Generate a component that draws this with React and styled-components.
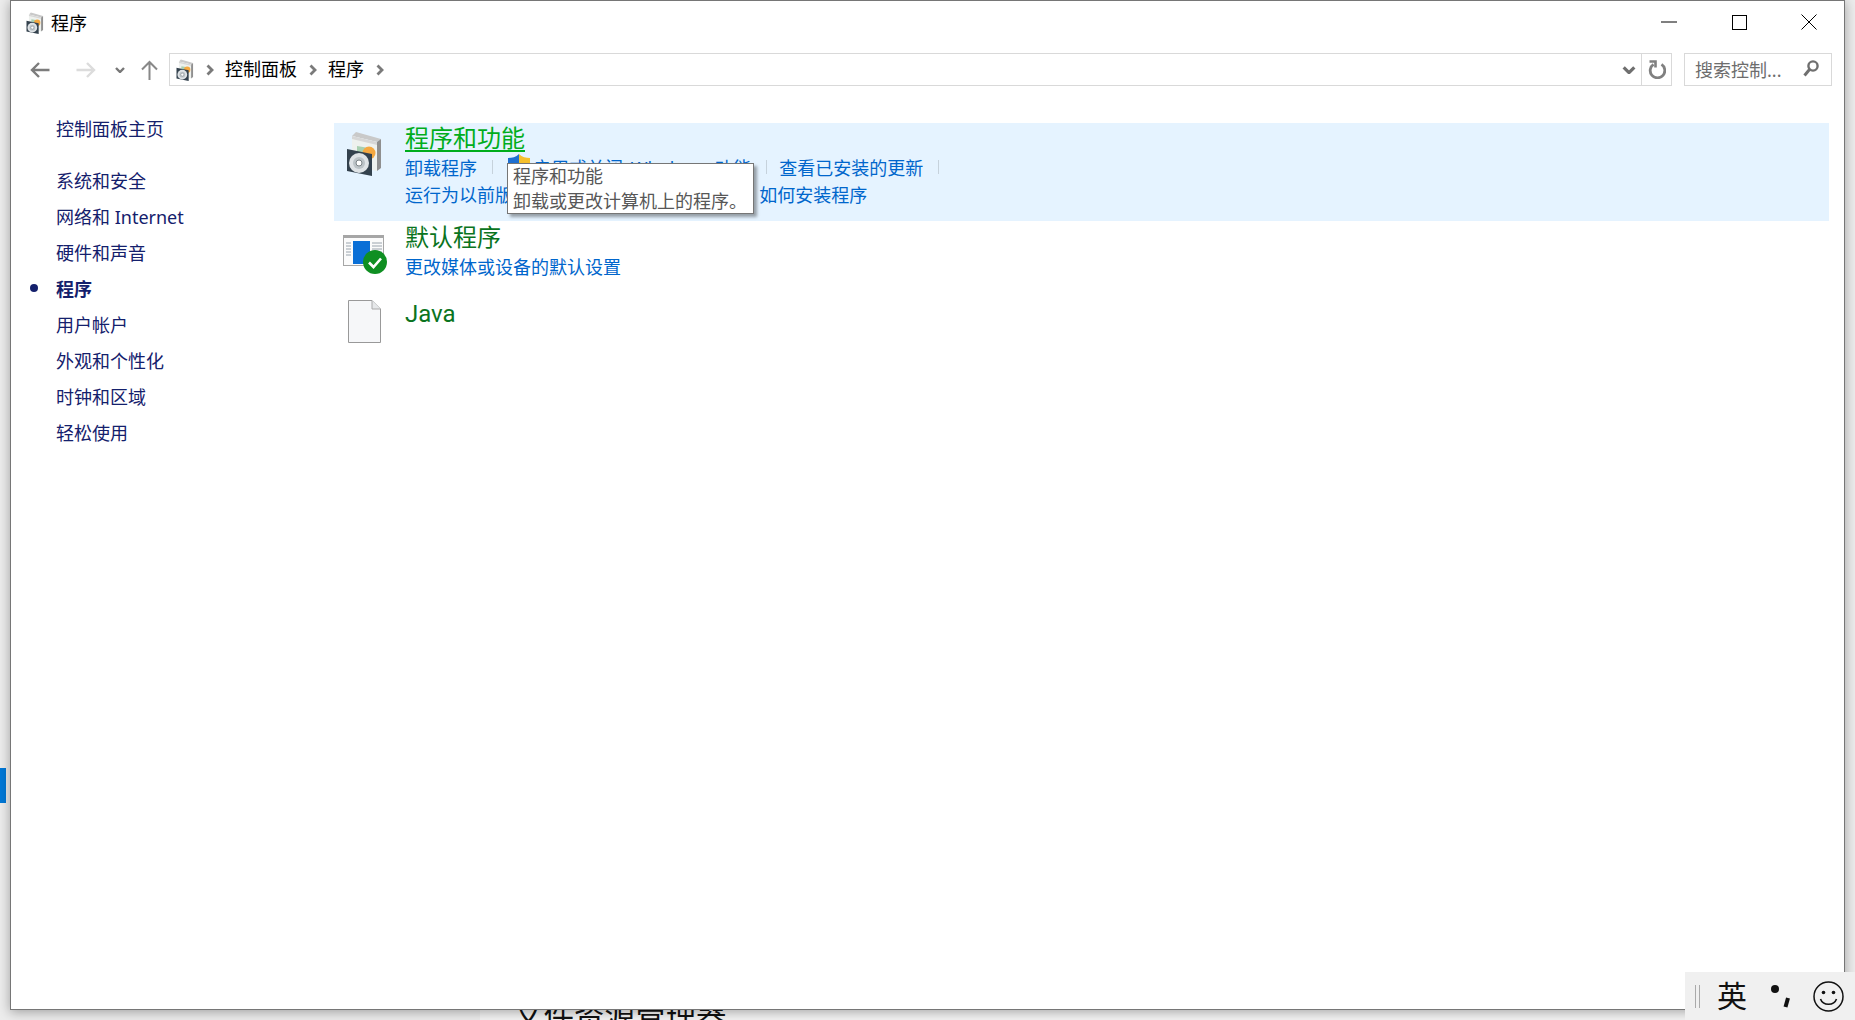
import React from 'react'
import styled, { createGlobalStyle } from 'styled-components'

const Global = createGlobalStyle`
  html, body { margin: 0; padding: 0; background: #ececec; }
  body { font-family: "Noto Sans", "Noto Sans CJK SC", sans-serif; font-size: 18px; }
`

const Desktop = styled.div`
  position: relative;
  width: 1855px;
  height: 1020px;
  overflow: hidden;
  background: #ececec;
`

const TaskMark = styled.div`
  position: absolute;
  left: 0;
  top: 768px;
  width: 6px;
  height: 35px;
  background: #0078d7;
`

const BackWindow = styled.div`
  position: absolute;
  left: 480px;
  top: 990px;
  right: 0;
  bottom: 0;
  padding-left: 33px;
  background: #f4f4f4;
  color: #111;
  font-size: 30.5px;
  line-height: 50px;
`

const Window = styled.div`
  position: absolute;
  left: 10px;
  top: 0;
  width: 1835px;
  height: 1010px;
  box-sizing: border-box;
  display: flex;
  flex-direction: column;
  background: #fff;
  border: 1px solid #767676;
  box-shadow: 0 2px 11px rgba(0, 0, 0, 0.33);
`

const TitleBar = styled.div`
  display: flex;
  align-items: center;
  height: 44px;
  padding-left: 15px;
  color: #000;
`

const TitleText = styled.span`
  margin-left: 6px;
  flex: 1;
  line-height: 44px;
`

const WinButton = styled.div`
  width: 70px;
  height: 42px;
  margin-bottom: 2px;
  display: flex;
  align-items: center;
  justify-content: center;
`

const NavBar = styled.div`
  display: flex;
  align-items: center;
  height: 49px;
  padding: 0 12px 0 8px;
`

const NavButton = styled.div`
  width: ${p => p.$w}px;
  height: 33px;
  display: flex;
  align-items: center;
  justify-content: center;
`

const AddressBar = styled.div`
  flex: 1;
  height: 33px;
  box-sizing: border-box;
  display: flex;
  align-items: center;
  padding-left: 6px;
  border: 1px solid #d9d9d9;
`

const Crumb = styled.span`
  color: #000;
  line-height: 31px;
`

const CrumbArrow = styled.span`
  display: flex;
  width: ${p => p.$w || 31}px;
  justify-content: center;
`

const Spacer = styled.div`
  flex: 1;
`

const DropButton = styled.div`
  width: 24px;
  display: flex;
  justify-content: center;
`

const RefreshCell = styled.div`
  width: 30px;
  height: 33px;
  box-sizing: border-box;
  display: flex;
  align-items: center;
  justify-content: center;
  border: 1px solid #d9d9d9;
  border-left: 0;
`

const SearchBox = styled.div`
  width: 148px;
  height: 33px;
  margin-left: 12px;
  box-sizing: border-box;
  display: flex;
  align-items: center;
  justify-content: space-between;
  padding: 0 12px 2px 10px;
  border: 1px solid #d9d9d9;
  color: #6d6d6d;
`

const Body = styled.div`
  flex: 1;
  display: flex;
`

const Sidebar = styled.nav`
  width: 323px;
  padding-top: 16px;
`

const SideItem = styled.div`
  display: flex;
  align-items: center;
  height: 36px;
  margin-bottom: ${p => p.$gap || 0}px;
  color: #14206c;
  font-weight: ${p => (p.$active ? 700 : 400)};
`

const Bullet = styled.span`
  width: 45px;
  display: flex;
  justify-content: center;
  &::before {
    content: "";
    display: ${p => (p.$on ? 'block' : 'none')};
    width: 8px;
    height: 8px;
    border-radius: 50%;
    background: #14206c;
  }
`

const Content = styled.main`
  flex: 1;
  padding: 29px 15px 0 0;
`

const Task = styled.section`
  position: relative;
  display: flex;
  margin-top: ${p => p.$top || 0}px;
  padding-bottom: 14px;
  background: ${p => (p.$hover ? '#e5f3ff' : 'transparent')};
`

const TaskIcon = styled.div`
  width: 62px;
  margin-right: 9px;
  padding-top: ${p => p.$top}px;
  display: flex;
  justify-content: center;
  align-items: flex-start;
`

const TaskTitle = styled.div`
  margin-bottom: -2px;
  font-family: Roboto, "Noto Sans CJK SC", sans-serif;
  font-size: 24px;
  line-height: 32px;
  color: ${p => (p.$hover ? '#00ad1c' : '#0a7420')};
  text-decoration: ${p => (p.$hover ? 'underline' : 'none')};
  text-underline-offset: 3px;
`

const LinkRow = styled.div`
  display: flex;
  align-items: center;
  height: 27px;
`

const TaskLink = styled.a`
  display: flex;
  align-items: center;
  color: #0066cc;
  white-space: pre;
  word-spacing: ${p => p.$words || 0}px;
`

const Sep = styled.span`
  width: 1px;
  height: 14px;
  margin: 0 ${p => p.$right || 15}px 0 ${p => p.$left || 15}px;
  background: #c6d2dc;
`

const Tooltip = styled.div`
  position: absolute;
  left: 173px;
  top: 40px;
  width: 247px;
  height: 51px;
  box-sizing: border-box;
  padding: 0 5px;
  background: #fff;
  border: 1px solid #767676;
  box-shadow: 3px 3px 3px rgba(0, 0, 0, 0.35);
  color: #575757;
  line-height: 24.5px;
  white-space: nowrap;
`

const ImeBar = styled.div`
  position: absolute;
  right: 0;
  bottom: 0;
  width: 170px;
  height: 48px;
  display: flex;
  align-items: center;
  background: #f0f0f0;
`

const ImeGrip = styled.span`
  width: 3px;
  height: 23px;
  margin: 0 17px 0 10px;
  border-left: 1px solid #aaa;
  border-right: 1px solid #aaa;
`

const ImeLabel = styled.span`
  width: 31px;
  font-size: 30px;
  line-height: 48px;
  color: #111;
`

const ImeIcons = styled.span`
  display: flex;
  align-items: center;
  margin-left: 22px;
  gap: 21px;
`

const ProgramsIcon = ({ w, h }) => (
  <svg width={w} height={h} viewBox="7 5 39 45">
    <path d="M13 10 L17 6 L42 13 L38 16Z" fill="#c9c9c9" />
    <path d="M13 10 L38 16 L38 45 L13 40Z" fill="#eef1ee" />
    <path d="M38 16 L42 13 L42 42 L38 45Z" fill="#8f8f8f" />
    <path d="M13 10 L38 16 L38 19 L13 13Z" fill="#d6d6d6" />
    <path d="M18 20 L30 22 L30 44 L18 40Z" fill="#a8cfb0" />
    <circle cx="30" cy="27" r="6.5" fill="#f5a840" />
    <path d="M8 23 L33 28 L33 50 L8 45Z" fill="#33414d" />
    <circle cx="20" cy="37" r="10" fill="#dfe3e6" />
    <circle cx="20" cy="37" r="6" fill="#bcc3c7" />
    <circle cx="20" cy="37" r="3" fill="#fff" stroke="#7d8488" />
  </svg>
)

const DefaultIcon = () => (
  <svg width="44" height="40" viewBox="0 0 44 40">
    <rect x="0" y="0" width="41" height="31" fill="#a6a6a6" />
    <rect x="1" y="3" width="39" height="27" fill="#fbfbfb" />
    <rect x="10" y="6" width="17" height="23" fill="#0a6fd6" />
    <path d="M3 8h5M3 11h5M3 14h5M3 17h5M3 20h5M29 8h10M29 11h10M29 14h10M29 17h10" stroke="#9aa4ad" strokeWidth="1" />
    <circle cx="32" cy="27" r="12" fill="#0f8f22" />
    <path d="M26 27.5 L30.5 32 L38 23.5" fill="none" stroke="#fff" strokeWidth="2.6" />
  </svg>
)

const FileIcon = () => (
  <svg width="33" height="43" viewBox="0 0 33 43" style={{ marginRight: 2 }}>
    <path d="M.5 .5 H24 L32.5 9 V42.5 H.5Z" fill="#f6f7f9" stroke="#999" />
    <path d="M24 .5 V9 H32.5" fill="#e6e8ea" stroke="#aaa" />
  </svg>
)

const ShieldIcon = () => (
  <svg width="22" height="26" viewBox="0 0 22 26" style={{ marginRight: 3 }}>
    <path d="M11 0 C8 3 4 4 0 4 V13 C0 19 5 23 11 26Z" fill="#1f6fd0" />
    <path d="M11 0 C14 3 18 4 22 4 V13 H11Z" fill="#f6c02c" />
    <path d="M11 13 H22 C22 19 17 23 11 26Z" fill="#1f6fd0" />
  </svg>
)

const Arrow = ({ color, flip }) => (
  <svg width="20" height="16" viewBox="0 0 20 16" style={flip ? { transform: 'scaleX(-1)' } : undefined}>
    <path d="M19.5 8 H2 M9 1 L2 8 L9 15" fill="none" stroke={color} strokeWidth="2.4" />
  </svg>
)

const UpArrow = () => (
  <svg width="17" height="20" viewBox="0 0 17 20">
    <path d="M8.5 20 V2 M1 9.5 L8.5 2 L16 9.5" fill="none" stroke="#888" strokeWidth="2" />
  </svg>
)

const Chevron = ({ w = 10, h = 6, stroke = 2.4, color = '#777' }) => (
  <svg width={w} height={h} viewBox="0 0 10 6">
    <path d="M1 1 L5 5 L9 1" fill="none" stroke={color} strokeWidth={stroke} />
  </svg>
)

const CrumbChevron = () => (
  <svg width="8" height="12" viewBox="0 0 8 12">
    <path d="M1.5 1.5 L6 6 L1.5 10.5" fill="none" stroke="#7a7a7a" strokeWidth="2.8" />
  </svg>
)

const RefreshIcon = () => (
  <svg width="18" height="19" viewBox="0 0 18 19">
    <path d="M5.5 4.4 A7.3 7.3 0 1 0 13.5 4.4" fill="none" stroke="#808080" strokeWidth="2.8" />
    <path d="M1.5 1.5 H7.5 V7.5" fill="none" stroke="#808080" strokeWidth="2.6" />
  </svg>
)

const SearchIcon = () => (
  <svg width="16" height="17" viewBox="0 0 16 17">
    <circle cx="10" cy="6" r="4.6" fill="none" stroke="#6f6f6f" strokeWidth="2.4" />
    <path d="M6.5 9.5 L1.5 15.5" stroke="#6f6f6f" strokeWidth="3" />
  </svg>
)

const ImePunct = () => (
  <svg width="22" height="24" viewBox="0 0 22 24">
    <circle cx="5" cy="5" r="4" fill="#111" />
    <path d="M18 14 L15.5 23" stroke="#111" strokeWidth="4" />
  </svg>
)

const Smiley = () => (
  <svg width="31" height="31" viewBox="0 0 31 31">
    <circle cx="15.5" cy="15.5" r="14.5" fill="none" stroke="#111" strokeWidth="1.5" />
    <circle cx="10.5" cy="11.5" r="1.8" fill="#111" />
    <circle cx="20.5" cy="11.5" r="1.8" fill="#111" />
    <path d="M7.5 18 C10 25 21 25 23.5 18" fill="none" stroke="#111" strokeWidth="1.6" />
  </svg>
)

const sideItems = ['系统和安全', '网络和 Internet', '硬件和声音', '程序', '用户帐户', '外观和个性化', '时钟和区域', '轻松使用']

export default function App() {
  return (
    <Desktop>
      <Global />
      <TaskMark />
      <BackWindow>文件资源管理器</BackWindow>
      <Window>
        <TitleBar>
          <ProgramsIcon w={19} h={22} />
          <TitleText>程序</TitleText>
          <WinButton>
            <svg width="16" height="2" viewBox="0 0 16 2"><path d="M0 1H16" stroke="#000" /></svg>
          </WinButton>
          <WinButton>
            <svg width="15" height="15" viewBox="0 0 15 15"><rect x=".5" y=".5" width="14" height="14" fill="none" stroke="#000" /></svg>
          </WinButton>
          <WinButton>
            <svg width="16" height="16" viewBox="0 0 16 16"><path d="M.5 .5L15.5 15.5M15.5 .5L.5 15.5" stroke="#000" /></svg>
          </WinButton>
        </TitleBar>
        <NavBar>
          <NavButton $w={42}><Arrow color="#7c7c7c" /></NavButton>
          <NavButton $w={49}><Arrow color="#dcdcdc" flip /></NavButton>
          <NavButton $w={19}><Chevron /></NavButton>
          <NavButton $w={40}><UpArrow /></NavButton>
          <AddressBar>
            <ProgramsIcon w={19} h={22} />
            <CrumbArrow $w={30}><CrumbChevron /></CrumbArrow>
            <Crumb>控制面板</Crumb>
            <CrumbArrow><CrumbChevron /></CrumbArrow>
            <Crumb>程序</Crumb>
            <CrumbArrow><CrumbChevron /></CrumbArrow>
            <Spacer />
            <DropButton><Chevron w={14} h={8} color="#6f6f6f" /></DropButton>
          </AddressBar>
          <RefreshCell><RefreshIcon /></RefreshCell>
          <SearchBox>
            <span>搜索控制...</span>
            <SearchIcon />
          </SearchBox>
        </NavBar>
        <Body>
          <Sidebar>
            <SideItem $gap={16}><Bullet />控制面板主页</SideItem>
            {sideItems.map(item => (
              <SideItem key={item} $active={item === '程序'}>
                <Bullet $on={item === '程序'} />
                {item}
              </SideItem>
            ))}
          </Sidebar>
          <Content>
            <Task $hover>
              <TaskIcon $top={8}><ProgramsIcon w={39} h={45} /></TaskIcon>
              <div>
                <TaskTitle $hover>程序和功能</TaskTitle>
                <LinkRow>
                  <TaskLink>卸载程序</TaskLink>
                  <Sep />
                  <TaskLink $words={3}><ShieldIcon />启用或关闭 Windows 功能</TaskLink>
                  <Sep $right={12} />
                  <TaskLink>查看已安装的更新</TaskLink>
                  <Sep />
                </LinkRow>
                <LinkRow>
                  <TaskLink>运行为以前版本的 Windows 编写的程序</TaskLink>
                  <Sep $left={18} />
                  <TaskLink>如何安装程序</TaskLink>
                </LinkRow>
              </div>
              <Tooltip>
                程序和功能
                <br />
                卸载或更改计算机上的程序。
              </Tooltip>
            </Task>
            <Task $top={1}>
              <TaskIcon $top={13}><DefaultIcon /></TaskIcon>
              <div>
                <TaskTitle>默认程序</TaskTitle>
                <LinkRow>
                  <TaskLink>更改媒体或设备的默认设置</TaskLink>
                </LinkRow>
              </div>
            </Task>
            <Task $top={5}>
              <TaskIcon $top={2}><FileIcon /></TaskIcon>
              <div>
                <TaskTitle>Java</TaskTitle>
              </div>
            </Task>
          </Content>
        </Body>
      </Window>
      <ImeBar>
        <ImeGrip />
        <ImeLabel>英</ImeLabel>
        <ImeIcons>
          <ImePunct />
          <Smiley />
        </ImeIcons>
      </ImeBar>
    </Desktop>
  )
}
